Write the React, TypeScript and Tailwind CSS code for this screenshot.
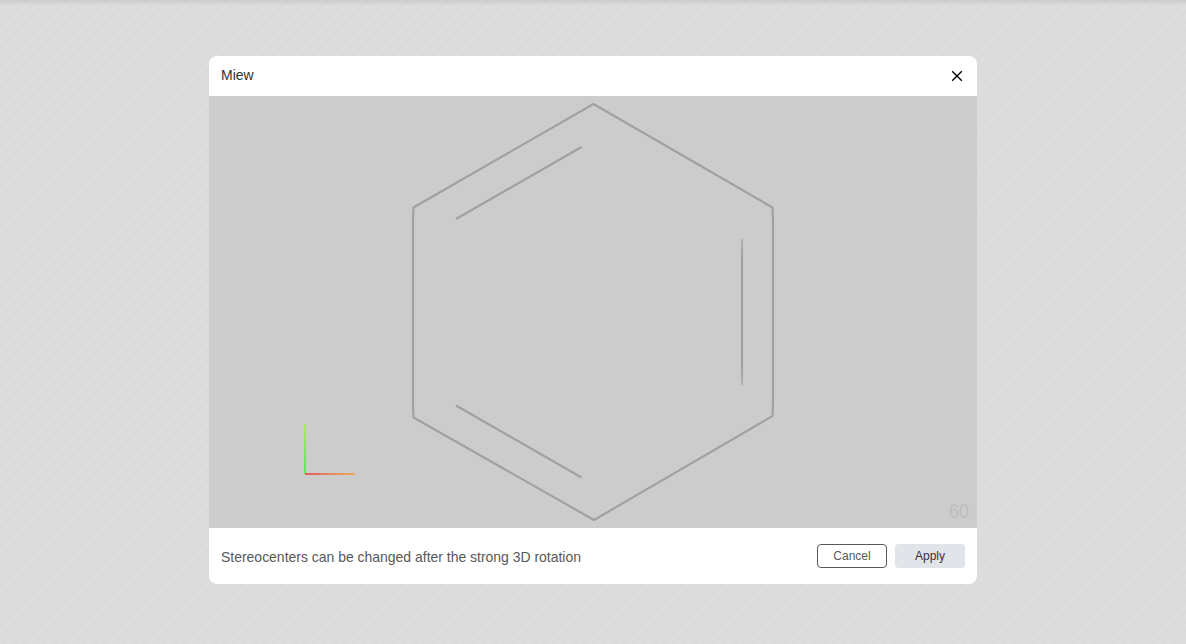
const bonds = [
  'M593.5 104L772.5 207.5L773 221V402L772.5 416L594 520L413.5 417.5L413 405V220L413.5 207.5Z',
  'M456 219L581.5 147',
  'M456 405.5L581.5 477.5',
];

function MoleculeView() {
  return (
    <div className="relative h-[432px] bg-[#cccccc]">
      <svg className="block h-full w-full" viewBox="209 96 768 432" fill="none">
        <defs>
          <linearGradient id="axisY" gradientUnits="userSpaceOnUse" x1="305" y1="474" x2="305" y2="424">
            <stop stopColor="#5ce65c" />
            <stop offset="1" stopColor="#ade666" />
          </linearGradient>
          <linearGradient id="axisX" gradientUnits="userSpaceOnUse" x1="305" y1="474" x2="355" y2="474">
            <stop stopColor="#e65c5c" />
            <stop offset="1" stopColor="#e6ad5c" />
          </linearGradient>
          <linearGradient id="innerBond" gradientUnits="userSpaceOnUse" x1="742" y1="239" x2="742" y2="385">
            <stop stopColor="#b2b2b2" />
            <stop offset="0.12" stopColor="#a0a0a0" />
            <stop offset="0.88" stopColor="#a0a0a0" />
            <stop offset="1" stopColor="#b2b2b2" />
          </linearGradient>
        </defs>
        <g stroke="#a0a0a0" strokeWidth="2.1" strokeLinejoin="round">
          {bonds.map((d) => (
            <path key={d} d={d} />
          ))}
          <path d="M742 239V385" stroke="url(#innerBond)" />
        </g>
        <path d="M305 474V424" stroke="url(#axisY)" strokeWidth="2" />
        <path d="M305 474H355" stroke="url(#axisX)" strokeWidth="2" />
      </svg>
      <span className="absolute right-2 bottom-1 origin-center scale-y-108 text-[18px] leading-6 text-[#bebebe]">60</span>
    </div>
  );
}

export default function App() {
  return (
    <div className="flex h-screen w-full items-start justify-center bg-[linear-gradient(to_bottom,rgba(0,0,0,0.08),transparent_6px),repeating-linear-gradient(135deg,#dddddd_0px,#dddddd_3.5px,#dadada_5px,#dadada_5.5px,#dddddd_7.07px)] pt-14 font-['Liberation_Sans',Arial,sans-serif]">
      <section className="flex h-[528px] w-[768px] flex-col overflow-hidden rounded-lg bg-white" role="dialog">
        <header className="flex h-10 items-center justify-between px-3">
          <h1 className="mb-0.5 scale-y-108 text-sm leading-4 text-[#333333]">Miew</h1>
          <button className="flex h-4 w-4 items-center justify-center" aria-label="Close">
            <svg width="16" height="16" viewBox="0 0 16 16" fill="none" stroke="black" strokeWidth="1.4">
              <path d="M3.2 3.2L12.8 12.8M12.8 3.2L3.2 12.8" />
            </svg>
          </button>
        </header>
        <MoleculeView />
        <footer className="flex flex-1 items-center justify-between px-3">
          <p className="mt-0.5 scale-y-108 text-sm leading-4 tracking-[-0.02px] text-[#585858]">Stereocenters can be changed after the strong 3D rotation</p>
          <div className="flex gap-2 text-xs">
            <button className="h-6 w-[70px] rounded border border-[#585858] text-[#585858]">Cancel</button>
            <button className="h-6 w-[70px] rounded bg-[#e1e5ea] text-[#333333]">Apply</button>
          </div>
        </footer>
      </section>
    </div>
  );
}
